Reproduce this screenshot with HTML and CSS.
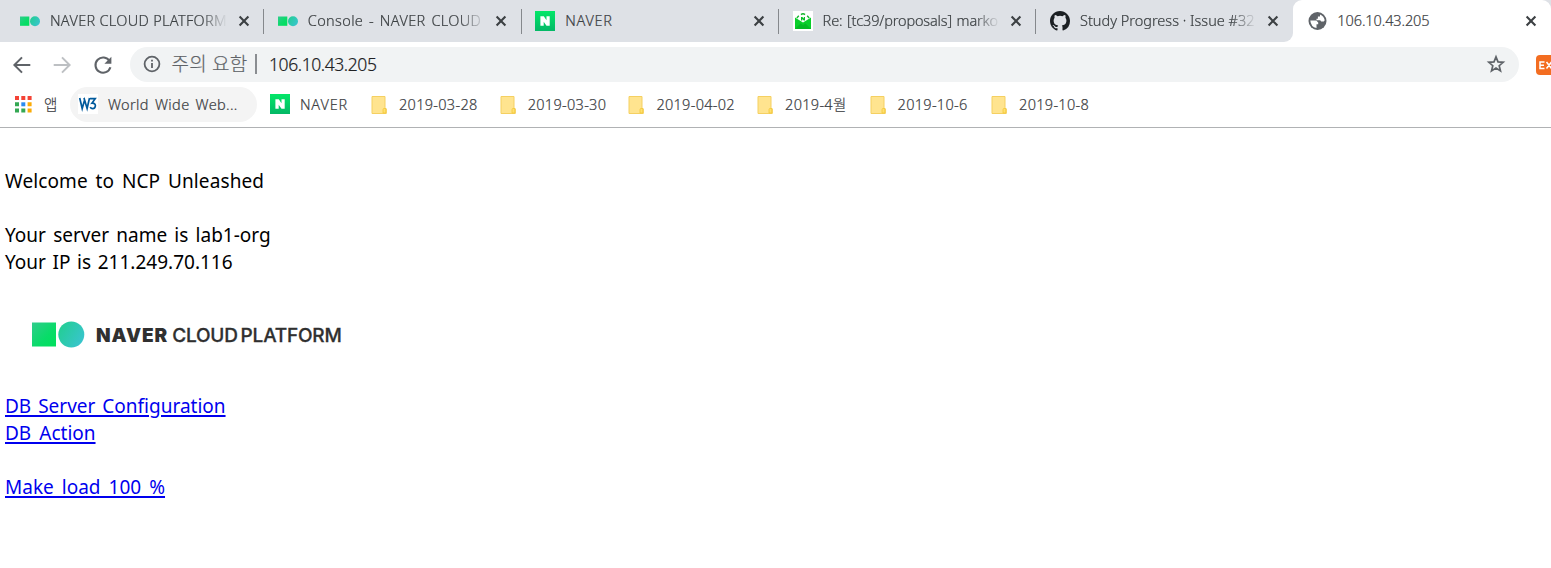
FILE: index.html
```html
<!DOCTYPE html>
<html lang="ko">
<head>
<meta charset="utf-8">
<title>106.10.43.205</title>
<link rel="stylesheet" href="styles.css">
</head>
<body>
<svg width="0" height="0" class="defs">
  <defs>
    <linearGradient id="sq" x1="0" y1="0" x2="1" y2="1"><stop offset="0" stop-color="#2fcc8c"/><stop offset=".6" stop-color="#08dc68"/><stop offset="1" stop-color="#00e05c"/></linearGradient>
    <linearGradient id="ci" x1="0" y1="0" x2="1" y2=".6"><stop offset="0" stop-color="#20cf8d"/><stop offset="1" stop-color="#38c5cb"/></linearGradient>
    <linearGradient id="nv" x1="0" y1="0" x2="0" y2="1"><stop offset="0" stop-color="#03e768"/><stop offset="1" stop-color="#04b866"/></linearGradient>
    <symbol id="ncp" viewBox="0 0 20 20"><rect y="5.5" width="9.3" height="9.3" fill="url(#sq)"/><circle cx="15" cy="10.2" r="5" fill="url(#ci)"/></symbol>
    <symbol id="naver" viewBox="0 0 20 20"><rect width="20" height="20" fill="url(#nv)"/><path d="M5.4 5.3h3.4l2.7 4V5.3h3.2v9.4h-3.2l-2.8-4v4H5.4z" fill="#fff"/></symbol>
    <symbol id="folder" viewBox="0 0 16 18"><path d="M1 .5h13v12l1.3.3v4.7H1z" fill="#ffe48f" stroke="#f5d061"/><path d="M12 17v-3.5q0-1 1-1h1.8v4.5z" fill="#ffe06f" stroke="#f3c838" stroke-width=".8"/></symbol>
    <symbol id="x" viewBox="0 0 12 12"><path d="M1.6 1.6l8.8 8.8M10.4 1.6l-8.8 8.8" stroke="#3c4043" stroke-width="2.1"/></symbol>
  </defs>
</svg>
<header class="browser">
  <div class="strip">
    <div class="tab"><svg class="icon"><use href="#ncp"/></svg><span class="label fade t-platform">NAVER CLOUD PLATFORM</span><svg class="close"><use href="#x"/></svg></div>
    <div class="tab"><svg class="icon"><use href="#ncp"/></svg><span class="label fade t-console">Console - NAVER CLOUD</span><svg class="close"><use href="#x"/></svg></div>
    <div class="tab"><svg class="icon"><use href="#naver"/></svg><span class="label t-naver">NAVER</span><svg class="close"><use href="#x"/></svg></div>
    <div class="tab"><svg class="icon" viewBox="0 0 20 20"><path d="M0 0h20v20H0z" fill="#fff"/><path d="M8 3.6q2-1.600 4 0" fill="none" stroke="#16b52f" stroke-width="1.6"/><path d="M3.800 7l2-2.300M16.200 7l-2-2.300" stroke="#16b52f" stroke-width="1.3"/><path d="M8 6h1.300l1.500 1.500V6H12v3.400h-1.300L9.300 7.900v1.500H8z" fill="#0bbf2b"/><path d="M2 6.500l8 5 8-5V18H2z" fill="#09cf2a"/><path d="M2 18l5.500-5.500L10 14l2.500-1.500L18 18z" fill="#04b923"/></svg><span class="label fade t-mail">Re: [tc39/proposals] marko</span><svg class="close"><use href="#x"/></svg></div>
    <div class="tab last"><svg class="icon" viewBox="0 0 16 16"><path fill="#1b1f23" d="M8 0C3.58 0 0 3.58 0 8c0 3.54 2.29 6.53 5.47 7.59.4.07.55-.17.55-.38 0-.19-.01-.82-.01-1.49-2.01.37-2.53-.49-2.69-.94-.09-.23-.48-.94-.82-1.13-.28-.15-.68-.52-.01-.53.63-.01 1.08.58 1.23.82.72 1.21 1.87.87 2.33.66.07-.52.28-.87.51-1.07-1.78-.2-3.64-.89-3.64-3.95 0-.87.31-1.59.82-2.15-.08-.2-.36-1.02.08-2.12 0 0 .67-.21 2.2.82a7.6 7.6 0 0 1 4 0c1.53-1.04 2.2-.82 2.2-.82.44 1.1.16 1.92.08 2.12.51.56.82 1.27.82 2.15 0 3.07-1.87 3.75-3.65 3.95.29.25.54.73.54 1.48 0 1.07-.01 1.93-.01 2.2 0 .21.15.46.55.38A8.01 8.01 0 0 0 16 8c0-4.42-3.58-8-8-8z"/></svg><span class="label fade t-study">Study Progress · Issue #32</span><svg class="close"><use href="#x"/></svg></div>
    <div class="tab active"><svg class="icon" viewBox="0 0 20 20"><circle cx="9.500" cy="10" r="9" fill="#5f6368"/><path d="M2.300 9.500h6l1.900 2v1.700h-1.700v3.900Q2.900 16 2.300 9.500z" fill="#fff"/><path d="M12 3.400q4 1.500 4.700 5.900l-1 1.200h-2.500l-1-1.200H8.500V7.700h1.400V5.600H12z" fill="#fff"/></svg><span class="label t-ip">106.10.43.205</span><svg class="close"><use href="#x"/></svg></div>
  </div>
  <div class="toolbar">
    <svg class="nav" viewBox="0 0 20 20"><path d="M18.3 10H3M10 2.4L2.4 10l7.6 7.6" fill="none" stroke="#5f6368" stroke-width="2"/></svg>
    <svg class="nav" viewBox="0 0 20 20"><path d="M1.7 10H17M10 2.4l7.6 7.6-7.6 7.6" fill="none" stroke="#bdc0c3" stroke-width="2"/></svg>
    <svg class="nav" viewBox="0 0 20 20"><path d="M16.6 6.1A7.6 7.6 0 1 0 17.4 12.2" fill="none" stroke="#5f6368" stroke-width="2.1"/><path d="M18.4 1.8v7h-7z" fill="#5f6368"/></svg>
    <div class="omnibox">
      <svg class="info" viewBox="0 0 18 18"><circle cx="9" cy="9" r="7.4" fill="none" stroke="#5f6368" stroke-width="1.8"/><path d="M9 8v5M9 4.8v1.8" stroke="#5f6368" stroke-width="1.8"/></svg>
      <span class="warn">주의 요함</span><i class="bar"></i><span class="url">106.10.43.205</span>
      <svg class="star" viewBox="0 0 20 20"><path d="M10 2.9l2 5 5.2.4-4 3.4 1.3 5.2-4.5-2.8-4.5 2.8 1.3-5.2-4-3.4 5.2-.4z" fill="none" stroke="#5f6368" stroke-width="1.7"/></svg>
    </div>
    <svg class="ext" viewBox="0 0 20 20"><rect width="20" height="20" rx="4" fill="#f36d21"/><path d="M8.5 7H4v6.5h4.5M4 10.2h4M10.5 7l5 6.5M15.5 7l-5 6.5" fill="none" stroke="#fff" stroke-width="1.5"/></svg>
  </div>
  <nav class="bookmarks">
    <a class="bm apps"><svg width="17" height="17" viewBox="0 0 17 17"><path d="M0 0h4v4H0zM6.3 0h4v4h-4zM12.6 0h4v4h-4z" fill="#f44336"/><path d="M0 6.3h4v4H0zM0 12.6h4v4H0zM6.3 12.6h4v4h-4z" fill="#34a853"/><path d="M6.3 6.3h4v4h-4z" fill="#2b8cf0"/><path d="M12.6 6.3h4v4h-4zM12.6 12.6h4v4h-4z" fill="#fbab06"/></svg><span>앱</span></a>
    <a class="bm w3"><svg width="20" height="20" viewBox="0 0 20 20"><path d="M0 0h20v20H0z" fill="#fff"/><path d="M1.7 4l2.5 10.5L6.6 6l2.5 8.5L11.5 4M6 4l.7 2.5M12 4.7h5.2l-3.3 4.5q3.5-.2 3.5 2.6-.2 2.9-2.7 2.9-1.7 0-2.500-1.5" fill="none" stroke="#005a9c" stroke-width="1.7"/></svg><span>World Wide Web...</span></a>
    <a class="bm nv"><svg width="20" height="20"><use href="#naver"/></svg><span>NAVER</span></a>
    <a class="bm f1"><svg class="fold"><use href="#folder"/></svg><span>2019-03-28</span></a>
    <a class="bm f2"><svg class="fold"><use href="#folder"/></svg><span>2019-03-30</span></a>
    <a class="bm f3"><svg class="fold"><use href="#folder"/></svg><span>2019-04-02</span></a>
    <a class="bm f4"><svg class="fold"><use href="#folder"/></svg><span>2019-4월</span></a>
    <a class="bm f5"><svg class="fold"><use href="#folder"/></svg><span>2019-10-6</span></a>
    <a class="bm f6"><svg class="fold"><use href="#folder"/></svg><span>2019-10-8</span></a>
  </nav>
</header>
<main class="page">
  <p class="welcome">Welcome to NCP Unleashed</p>
  <p class="server">Your server name is lab1-org</p>
  <p class="ip">Your IP is 211.249.70.116</p>
  <div class="logo">
    <svg width="54" height="28" viewBox="0 0 54 28"><rect x="0" y="1.5" width="24" height="24" fill="url(#sq)"/><circle cx="39.3" cy="13.5" r="13" fill="url(#ci)"/></svg>
    <b>NAVER</b><span>CLOUD PLATFORM</span>
  </div>
  <p><a class="l1" href="#">DB Server Configuration</a></p>
  <p><a class="l2" href="#">DB Action</a></p>
  <p class="load"><a class="l3" href="#">Make load 100 %</a></p>
</main>
</body>
</html>
```
FILE: styles.css
```css
* { box-sizing: border-box; }
body { margin: 0; height: 568px; overflow: hidden; background: #fff; color: #000; font-family: "Noto Sans", "Noto Sans CJK KR", sans-serif; }
svg { display: block; flex: none; }
.defs { position: absolute; }
.browser { -webkit-text-stroke: .2px currentColor; }
.strip { display: flex; height: 42px; background: #fff; font-size: 14.5px; color: #3c4043; font-weight: 300; }
.tab { display: flex; align-items: center; flex: none; width: 257.4px; padding: 0 14px 1px 14px; background: #dee1e6; position: relative; }
.tab:first-child { width: 263.8px; padding-left: 20px; }
.tab::after { content: ""; position: absolute; right: -.4px; top: 9px; width: 1px; height: 25px; background: #85888c; z-index: 1; }
.tab.last { border-radius: 0 0 9px 0; }
.tab.last::after, .tab.active::after { display: none; }
.tab.active { width: 257.6px; padding-left: 15px; background: #fff; border-radius: 9px 9px 0 0; box-shadow: 0 -9px 0 #dee1e6; }
.icon { width: 20px; height: 20px; }
.label { width: 177px; margin-left: 10px; overflow: hidden; white-space: nowrap; line-height: 24px; position: relative; top: -.5px; }
.fade { -webkit-mask-image: linear-gradient(to right, #000 86%, transparent); mask-image: linear-gradient(to right, #000 86%, transparent); }
.t-platform { letter-spacing: .3px; }
.t-console { letter-spacing: .35px; word-spacing: 1.7px; }
.t-naver { letter-spacing: .7px; }
.t-mail { letter-spacing: -.15px; word-spacing: 1px; }
.t-ip { letter-spacing: -.1px; margin-left: 9px; }
.close { width: 12px; height: 12px; margin-left: auto; }
.toolbar { display: flex; align-items: center; height: 45px; padding: 0 0 0 12.2px; overflow: hidden; }
.nav { width: 20px; height: 20px; margin-right: 20.3px; }
.omnibox { display: flex; align-items: center; flex: none; width: 1389px; height: 35px; margin-left: -3.1px; padding: 0 13px 1px 13.5px; border-radius: 18px; background: #f1f3f4; font-size: 17.5px; font-weight: 300; }
.info { width: 18px; height: 18px; }
.warn { width: 76px; margin: 0 0 3px 10px; color: #5f6368; font-size: 19px; letter-spacing: .2px; white-space: nowrap; }
.bar { width: 1.5px; height: 20px; margin: 0 12px 0 8px; background: #8a8d91; }
.url { color: #202124; letter-spacing: -.4px; }
.star { width: 20px; height: 20px; margin-left: auto; }
.ext { width: 20px; height: 20px; margin-left: 17px; }
.bookmarks { display: flex; align-items: center; height: 41px; padding-bottom: 6px; border-bottom: 1px solid #b0b2b4; font-size: 14.5px; font-weight: 300; color: #3c4043; }
.bm { display: flex; align-items: center; flex: none; height: 35px; white-space: nowrap; letter-spacing: .3px; }
.apps { width: 70px; padding-left: 15px; gap: 12px; }
.apps span { margin-bottom: 2px; }
.w3 { width: 187px; padding-left: 8px; gap: 10px; border-radius: 18px; background: #f4f4f4; word-spacing: 2px; letter-spacing: .35px; }
.nv { width: 114px; padding-left: 13px; gap: 10px; letter-spacing: .8px; }
.fold { width: 16px; height: 18px; margin-top: 1px; }
.f1, .f2, .f3, .f4, .f5, .f6 { gap: 12px; width: 128.7px; }
.f4 { width: 112.5px; }
.f4 span { line-height: 22px; margin-bottom: 1px; }
.f5 { width: 121.5px; }
.page { padding: 40px 5px 0; font-size: 19px; line-height: 27px; }
p { margin: 0; white-space: nowrap; }
.welcome { margin-bottom: 27px; word-spacing: 2.8px; letter-spacing: .1px; }
.server { word-spacing: 2.3px; }
.ip { word-spacing: 1.7px; }
.l1 { word-spacing: 2px; }
.l2, .l3 { word-spacing: 3.1px; }
.logo { display: flex; align-items: center; height: 117px; padding: 1px 0 0 27px; color: #303030; font-family: Inter, sans-serif; font-size: 19px; }
.logo b { margin-left: 10px; font-weight: 900; letter-spacing: .95px; }
.logo span { margin-left: 4px; font-weight: 550; letter-spacing: -.2px; word-spacing: -2px; white-space: nowrap; -webkit-text-stroke: .3px currentColor; }
.load { margin-top: 27px; }
a { color: inherit; text-decoration: none; }
.page a { color: #0000ee; text-decoration: underline; text-decoration-thickness: 2px; text-underline-offset: 2px; }
```
